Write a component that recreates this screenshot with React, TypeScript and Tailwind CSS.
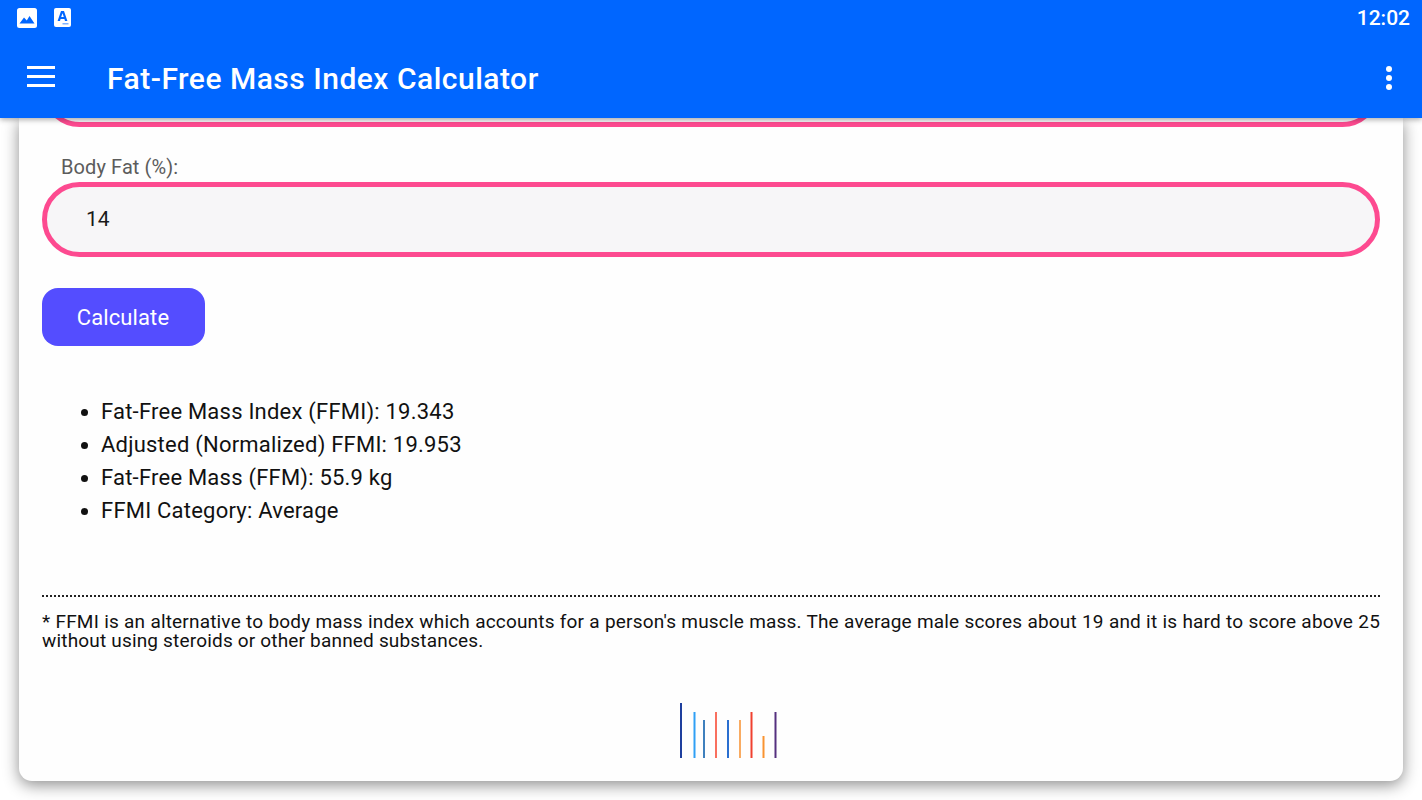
const results = [
  'Fat-Free Mass Index (FFMI): 19.343',
  'Adjusted (Normalized) FFMI: 19.953',
  'Fat-Free Mass (FFM): 55.9 kg',
  'FFMI Category: Average',
];

// x offset, top y and colour of each bar in the logo
const logoBars = [
  { x: 34, y: 1, color: '#1e3f9e' },
  { x: 47.5, y: 10, color: '#2f9ff5' },
  { x: 57, y: 18, color: '#3f80bd' },
  { x: 69, y: 10, color: '#f9705f' },
  { x: 81, y: 18, color: '#2a6fd0' },
  { x: 93, y: 18, color: '#f9ab62' },
  { x: 104.5, y: 10, color: '#f0402f' },
  { x: 116.5, y: 34, color: '#f99331' },
  { x: 128.5, y: 10, color: '#55307f' },
];

function StatusIcons() {
  return (
    <div className="mb-[2px] flex items-center gap-[17px]">
      <svg width="20" height="20" viewBox="0 0 20 20">
        <rect width="20" height="20" rx="2.5" fill="#fff" />
        <path d="M2.5 15.5 L7 9.5 L9.8 12.6 L12.5 8 L17.5 15.5 Z" fill="#0066ff" />
      </svg>
      <svg width="17" height="19" viewBox="0 0 17 19">
        <rect width="17" height="19" rx="2" fill="#fff" />
        <path
          fillRule="evenodd"
          d="M7 3 H10 L13.4 13 H11 L10.4 11 H6.6 L6 13 H3.6 Z M7.2 9 H9.8 L8.5 5.2 Z"
          fill="#0066ff"
        />
        <rect x="8.5" y="15" width="6" height="1.5" fill="#7fb2ff" />
      </svg>
    </div>
  );
}

export default function App() {
  return (
    <div className="flex h-[800px] w-[1422px] flex-col overflow-hidden bg-white font-['Roboto',sans-serif]">
      <header className="relative z-10 h-[118px] shrink-0 bg-[#0066ff] text-white shadow-[0_2px_5px_rgba(0,0,0,0.3)]">
        <div className="flex h-[37px] items-center justify-between pl-[17px] pr-3">
          <StatusIcons />
          <span className="text-[21px] font-medium">12:02</span>
        </div>
        <div className="flex h-[81px] items-center pb-[3px] pl-[27px] pr-[30px]">
          <div className="flex w-[28px] flex-col gap-[6px]">
            <span className="h-[3px] bg-white" />
            <span className="h-[3px] bg-white" />
            <span className="h-[3px] bg-white" />
          </div>
          <h1 className="ml-[52px] mt-1 flex-1 text-[30px] font-medium tracking-[0.5px]">Fat-Free Mass Index Calculator</h1>
          <div className="mt-1 flex flex-col gap-[3px]">
            <span className="size-[6px] rounded-full bg-white" />
            <span className="size-[6px] rounded-full bg-white" />
            <span className="size-[6px] rounded-full bg-white" />
          </div>
        </div>
      </header>

      <main className="flex-1 overflow-hidden px-[19px] pb-[19px]">
        <div className="flex h-full flex-col rounded-b-[13px] bg-[#fefefe] px-[23px] shadow-[0_4px_16px_rgba(0,0,0,0.45)]">
          {/* previous field, scrolled almost out of view */}
          <div className="-mt-[66px] h-[75px] shrink-0 rounded-full border-[5px] border-[#fd4a90] bg-[#f7f6f8]" />

          <label className="ml-[19px] mt-[28px] text-[20px] leading-[24px] tracking-[0.1px] text-[#5c5c5c]">Body Fat (%):</label>
          <div className="mt-[3px] flex h-[75px] items-center rounded-full border-[5px] border-[#fd4a90] bg-[#f7f6f8] pl-[39px] text-[21px] text-[#1a1a1a]">
            14
          </div>

          <button className="mt-[31px] h-[58px] w-[163px] rounded-[16px] bg-[#544dff] pr-[1px] text-[22px] tracking-[0.1px] text-white">
            Calculate
          </button>

          <ul className="ml-[59px] mt-[49px] list-disc text-[22px] leading-[33px] tracking-[0.22px] text-[#111]">
            {results.map((line) => (
              <li key={line}>{line}</li>
            ))}
          </ul>

          <div className="mt-[68px] border-t-2 border-dotted border-[#222]" />
          <p className="mt-[15px] text-justify text-[19px] leading-[19px] tracking-[0.18px] text-[#111]">
            * FFMI is an alternative to body mass index which accounts for a person's muscle mass. The average male scores about 19 and it is hard to score above 25 without using steroids or other banned substances.
          </p>

          <div className="mt-[52px] flex justify-center">
            <svg width="131" height="56" viewBox="0 0 131 56">
              {logoBars.map((bar) => (
                <rect key={bar.x} x={bar.x} y={bar.y} width="2" height={56 - bar.y} fill={bar.color} />
              ))}
            </svg>
          </div>
        </div>
      </main>
    </div>
  );
}
